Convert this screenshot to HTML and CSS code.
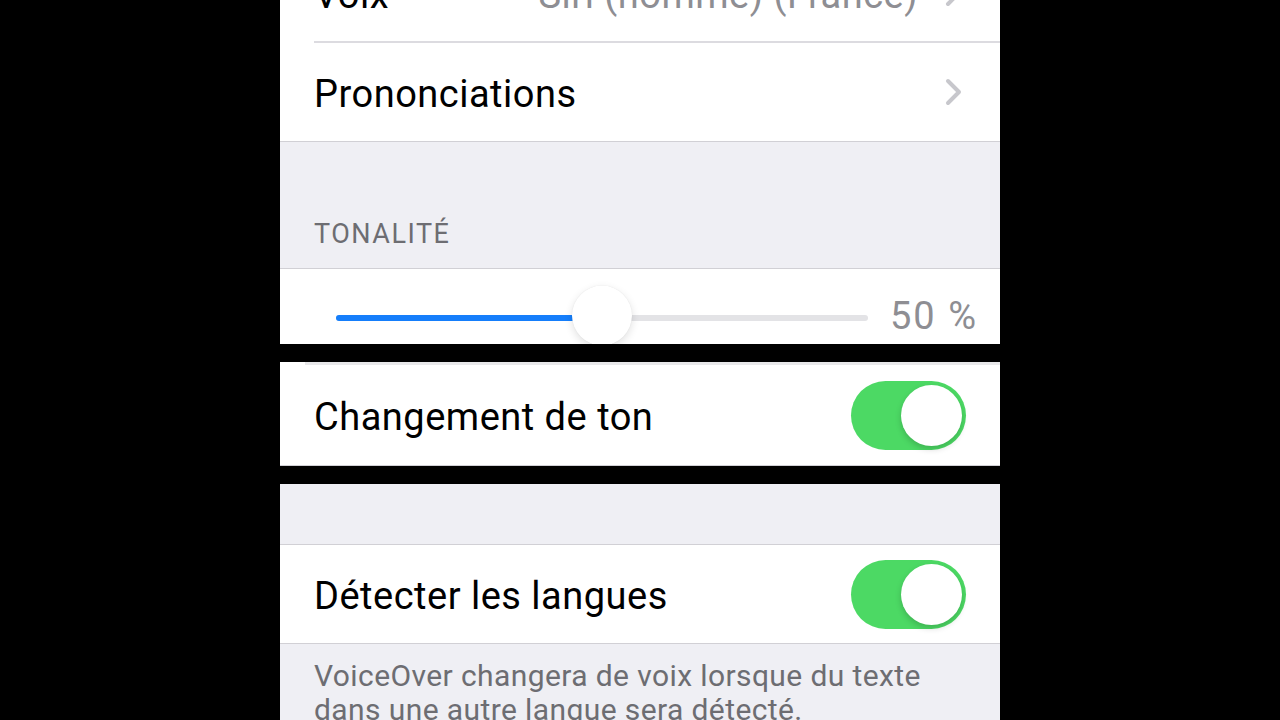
FILE: index.html
```html
<!DOCTYPE html>
<html lang="fr">
<head>
    <meta charset="UTF-8">
    <meta name="viewport" content="width=device-width, initial-scale=1.0">
    <title>VoiceOver - Parole</title>
    <link rel="stylesheet" href="styles.css">
</head>
<body>
    <div class="screen">
        <!-- Voix et prononciations -->
        <div class="group first-group">
            <div class="row">
                <div class="cell with-sep">
                    <span class="label">Voix</span>
                    <span class="value">Siri (homme) (France)</span>
                    <svg class="chevron" viewBox="0 0 17 28"><polyline points="3,3 14,14 3,25"/></svg>
                </div>
            </div>
            <div class="row">
                <div class="cell">
                    <span class="label">Prononciations</span>
                    <svg class="chevron" viewBox="0 0 17 28"><polyline points="3,3 14,14 3,25"/></svg>
                </div>
            </div>
        </div>

        <!-- Tonalité -->
        <div class="section-header">TONALITÉ</div>
        <div class="group slider-row">
            <div class="track">
                <div class="fill" style="width: 50%"></div>
                <div class="thumb" style="left: 50%"></div>
            </div>
            <span class="percent">50 %</span>
        </div>

        <div class="band"></div>

        <div class="group tone-group">
            <div class="top-line"></div>
            <div class="row tall">
                <div class="cell">
                    <span class="label">Changement de ton</span>
                    <div class="switch on"><div class="knob"></div></div>
                </div>
            </div>
        </div>

        <div class="band"></div>

        <!-- Langues -->
        <div class="spacer"></div>
        <div class="group">
            <div class="row">
                <div class="cell">
                    <span class="label">Détecter les langues</span>
                    <div class="switch on"><div class="knob"></div></div>
                </div>
            </div>
        </div>
        <p class="footer">VoiceOver changera de voix lorsque du texte dans une autre langue sera détecté.</p>
    </div>
</body>
</html>
```

FILE: styles.css
```css
/* Base */
* {
    margin: 0;
    padding: 0;
    box-sizing: border-box;
}

body {
    background-color: #000;
    font-family: Roboto, "Noto Sans", sans-serif;
    overflow: hidden;
}

/* Ecran central */
.screen {
    width: 720px;
    height: 720px;
    margin: 0 auto;
    background-color: #efeff4;
    overflow: hidden;
}

/* Groupes de cellules */
.group {
    background-color: #fff;
    border-top: 1px solid #d1d0d5;
    border-bottom: 1px solid #d1d0d5;
}

.first-group {
    margin-top: -56px;
}

.row {
    height: 98px;
    padding-left: 34px;
}

.row.tall {
    height: 100px;
}

.cell {
    height: 100%;
    display: flex;
    align-items: center;
    padding-right: 34px;
}

.cell.with-sep {
    border-bottom: 2px solid #dcdbe0;
}

.label {
    flex: 1;
    font-size: 38px;
    color: #000;
    letter-spacing: 0.5px;
    margin-top: 3px;
}

.value {
    font-size: 38px;
    color: #8e8e93;
    letter-spacing: 0.5px;
    margin-top: 3px;
    margin-right: 27px;
}

.chevron {
    width: 17px;
    height: 28px;
    margin-right: 4px;
    fill: none;
    stroke: #c7c7cc;
    stroke-width: 4;
    stroke-linecap: round;
    stroke-linejoin: round;
}

/* En-tete de section */
.section-header {
    height: 126px;
    padding: 0 34px 18px;
    display: flex;
    align-items: flex-end;
    font-size: 27px;
    letter-spacing: 1.5px;
    color: #6d6d72;
}

/* Curseur */
.slider-row {
    height: 76px;
    border-bottom: none;
    display: flex;
    align-items: center;
    padding: 0 22px 0 56px;
    overflow: hidden;
}

.track {
    flex: 1;
    height: 6px;
    border-radius: 3px;
    background-color: #e3e3e6;
    position: relative;
    margin-top: 22px;
}

.fill {
    height: 100%;
    border-radius: 3px;
    background-color: #157efb;
}

.thumb {
    position: absolute;
    top: 50%;
    width: 60px;
    height: 60px;
    border-radius: 50%;
    background-color: #fff;
    transform: translate(-50%, -54%);
    box-shadow: 0 3px 8px rgba(0, 0, 0, 0.12), 0 0 1px rgba(0, 0, 0, 0.1);
}

.percent {
    margin-left: 22px;
    margin-top: 18px;
    font-size: 38px;
    letter-spacing: 2px;
    color: #8e8e93;
}

/* Bande noire (artefact video) */
.band {
    height: 18px;
    background-color: #000;
}

.tone-group {
    border-top: none;
}

.top-line {
    height: 3px;
    margin-left: 25px;
    background-color: #e8e8ea;
}

/* Interrupteur */
.switch {
    width: 115px;
    height: 69px;
    border-radius: 35px;
    background-color: #4cd964;
    display: flex;
    align-items: center;
    justify-content: flex-end;
    padding-right: 4px;
}

.knob {
    width: 61px;
    height: 61px;
    border-radius: 50%;
    background-color: #fff;
    box-shadow: 0 3px 6px rgba(0, 0, 0, 0.18);
}

.spacer {
    height: 60px;
}

/* Texte explicatif */
.footer {
    padding: 15px 34px 0;
    font-size: 30px;
    line-height: 34px;
    letter-spacing: 0.4px;
    color: #6d6d72;
}
```
